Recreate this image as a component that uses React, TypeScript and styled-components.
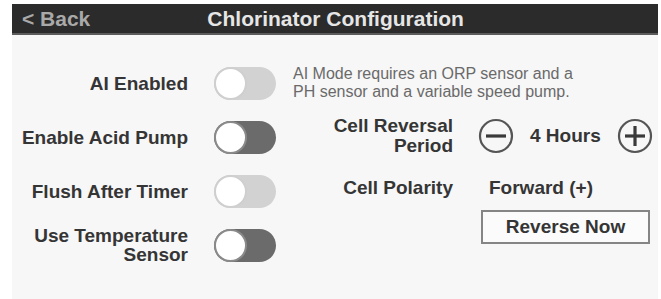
import styled, { createGlobalStyle } from 'styled-components';

const GlobalStyle = createGlobalStyle`
  html, body {
    margin: 0;
    padding: 0;
    background: #ffffff;
  }
  body {
    font-family: 'Liberation Sans', Arial, sans-serif;
  }
`;

type ToggleProps = { $dark?: boolean };

const Toggle = ({ dark }: { dark?: boolean }) => (
  <Track $dark={dark}>
    <Knob $dark={dark} />
  </Track>
);

const RoundIcon = ({ plus }: { plus?: boolean }) => (
  <svg width="36" height="36" viewBox="0 0 36 36">
    <circle cx="18" cy="18" r="16" fill="none" stroke="#555" strokeWidth="2.2" />
    <line x1="8" y1="18" x2="28" y2="18" stroke="#3a3a3a" strokeWidth="3.2" />
    {plus && <line x1="18" y1="8" x2="18" y2="28" stroke="#3a3a3a" strokeWidth="3.2" />}
  </svg>
);

export default function App() {
  return (
    <>
      <GlobalStyle />
      <Panel>
        <Header>
          <BackLink>&lt; Back</BackLink>
          <Title>Chlorinator Configuration</Title>
        </Header>
        <Content>
          <LeftGrid>
            <Label>AI Enabled</Label>
            <Toggle />
            <Label>Enable Acid Pump</Label>
            <Toggle dark />
            <Label>Flush After Timer</Label>
            <Toggle />
            <Label>
              Use Temperature
              <br />
              Sensor
            </Label>
            <Toggle dark />
          </LeftGrid>
          <RightCol>
            <Note>
              AI Mode requires an ORP sensor and a
              <br />
              PH sensor and a variable speed pump.
            </Note>
            <SettingRow $top={15}>
              <SettingLabel>
                Cell Reversal
                <br />
                Period
              </SettingLabel>
              <Stepper>
                <RoundIcon />
                <Value>4 Hours</Value>
                <RoundIcon plus />
              </Stepper>
            </SettingRow>
            <SettingRow $top={21}>
              <SettingLabel>Cell Polarity</SettingLabel>
              <Value $indent={10}>Forward (+)</Value>
            </SettingRow>
            <SettingRow $top={11}>
              <span />
              <ReverseButton>Reverse Now</ReverseButton>
            </SettingRow>
          </RightCol>
        </Content>
      </Panel>
    </>
  );
}

const Panel = styled.div`
  margin: 4px 3px 0 12px;
  height: 295px;
  background: #f7f7f7;
  display: flex;
  flex-direction: column;
`;

const Header = styled.div`
  height: 29px;
  background: #2b2b2b;
  border-bottom: 2px solid #5c5c5c;
  display: flex;
  align-items: center;
`;

const BackLink = styled.div`
  margin-left: 10px;
  font-size: 21px;
  font-weight: 700;
  color: #a9a9a9;
`;

const Title = styled.div`
  margin-left: 117px;
  font-size: 21px;
  font-weight: 700;
  color: #e6e6e6;
`;

const Content = styled.div`
  display: flex;
  padding-top: 21px;
`;

const LeftGrid = styled.div`
  display: grid;
  grid-template-columns: 176px 62px;
  grid-auto-rows: 54px;
  column-gap: 26px;
  align-items: center;
`;

const Label = styled.div`
  text-align: right;
  font-size: 19px;
  font-weight: 700;
  line-height: 19px;
  color: #353535;
`;

const Track = styled.div<ToggleProps>`
  position: relative;
  width: 62px;
  height: 33px;
  border-radius: 17px;
  background: ${(p) => (p.$dark ? '#6b6b6b' : '#d2d2d2')};
`;

const Knob = styled.div<ToggleProps>`
  position: absolute;
  left: 0;
  top: 0;
  width: 29px;
  height: 29px;
  border-radius: 50%;
  background: #ffffff;
  border: 2px solid ${(p) => (p.$dark ? '#8a8a8a' : '#cfcfcf')};
`;

const RightCol = styled.div`
  margin-left: 17px;
  width: 366px;
  display: flex;
  flex-direction: column;
`;

const Note = styled.div`
  margin-top: 9px;
  font-size: 16px;
  line-height: 18px;
  color: #6a6a6a;
`;

const SettingRow = styled.div<{ $top: number }>`
  margin-top: ${(p) => p.$top}px;
  display: grid;
  grid-template-columns: 160px 1fr;
  column-gap: 26px;
  align-items: center;
`;

const SettingLabel = styled.div`
  text-align: right;
  font-size: 19px;
  font-weight: 700;
  line-height: 20px;
  color: #353535;
`;

const Stepper = styled.div`
  display: flex;
  align-items: center;
  gap: 16px;
  margin-left: -1px;
`;

const Value = styled.div<{ $indent?: number }>`
  padding-left: ${(p) => p.$indent ?? 0}px;
  font-size: 19px;
  font-weight: 700;
  color: #353535;
`;

const ReverseButton = styled.button`
  margin-left: 2px;
  width: 169px;
  height: 34px;
  background: #fbfbfb;
  border: 2px solid #858585;
  font-family: 'Liberation Sans', Arial, sans-serif;
  font-size: 19px;
  font-weight: 700;
  color: #353535;
  padding: 0;
`;
